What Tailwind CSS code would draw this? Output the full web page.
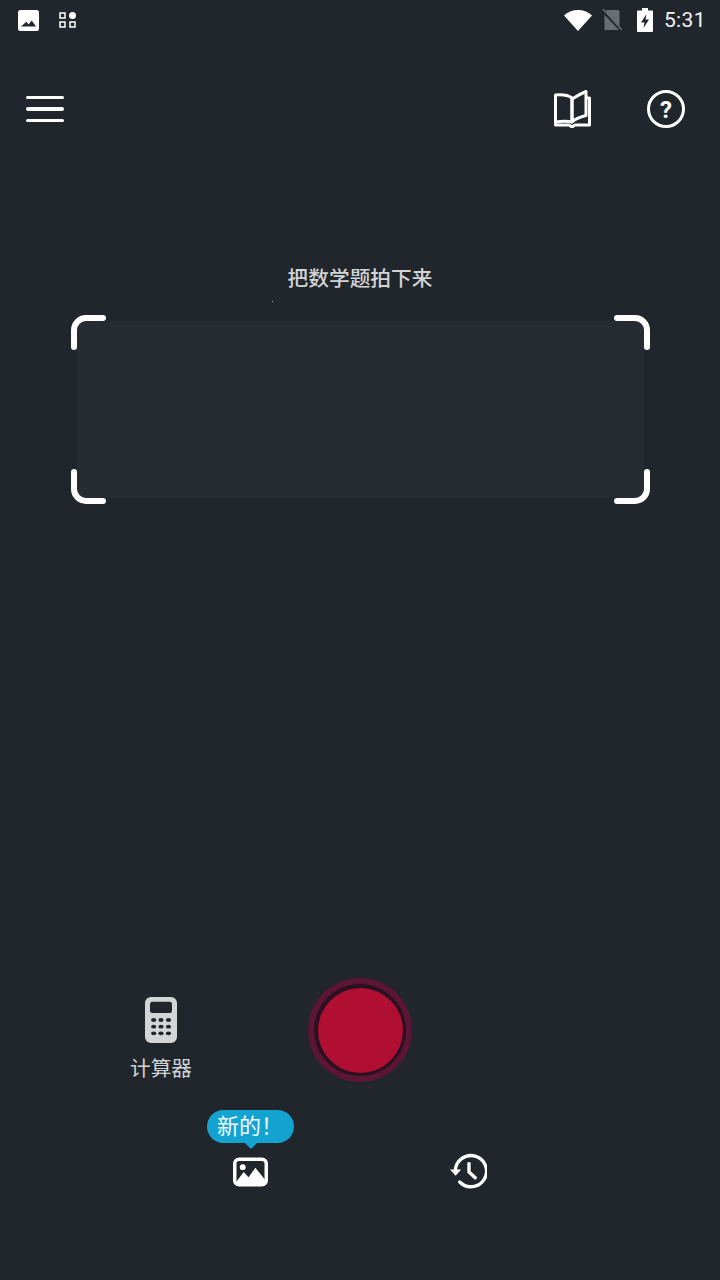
<!DOCTYPE html>
<html lang="zh-CN">
<head>
<meta charset="UTF-8">
<meta name="viewport" content="width=device-width, initial-scale=1.0">
<title>拍照</title>
<script src="https://cdn.jsdelivr.net/npm/@tailwindcss/browser@4"></script>
</head>
<body class="bg-[#20262c]">
<div class="relative flex flex-col w-[720px] h-[1280px] overflow-hidden bg-[#20262c] text-white font-['Roboto','Noto_Sans_CJK_SC',sans-serif]">

    <!-- Status bar -->
    <div class="flex items-center h-[40px] pl-[18px] pr-[14px]">
        <svg class="w-[21px] h-[21px]" viewBox="0 0 21 21"><path fill="#fff" fill-rule="evenodd" d="M2.5 0h16A2.5 2.5 0 0 1 21 2.5v16a2.5 2.5 0 0 1-2.500 2.500h-16A2.500 2.500 0 0 1 0 18.500v-16A2.500 2.500 0 0 1 2.500 0zM3 16.500h15l-4.300-6-3.100 4-2.200-2.700z"/></svg>
        <svg class="ml-[20px] w-[17px] h-[16px]" viewBox="0 0 17 16"><g fill="none" stroke="#fff" stroke-width="1.500"><rect x="1" y="1" width="5" height="5"/><rect x="1" y="10" width="5" height="5"/><rect x="11" y="10" width="5" height="5"/></g><circle cx="13.500" cy="3.500" r="3.500" fill="#fff"/></svg>
        <svg class="ml-auto w-[28px] h-[21px]" viewBox="0 0 28 21"><path fill="#fff" d="M14 21 0 5.500C3.500 2 8.500 0 14 0s10.500 2 14 5.500z"/></svg>
        <svg class="ml-[10px] w-[20px] h-[22px]" viewBox="0 0 20 22"><path fill="#6b6e72" d="M5 1h10.500A2 2 0 0 1 17.500 3v18h-15V4z"/><path stroke="#20262c" stroke-width="3" d="M0 1 19 21"/><path stroke="#6b6e72" stroke-width="1.500" d="M1 0 20 21"/></svg>
        <svg class="ml-[15px] w-[16px] h-[24px]" viewBox="0 0 16 24"><path fill="#fff" fill-rule="evenodd" d="M5 0h6v2.500h4a1 1 0 0 1 1 1V23a1 1 0 0 1-1 1H1a1 1 0 0 1-1-1V3.500a1 1 0 0 1 1-1h4zM9.500 6 4 14.500h3.500L6.500 20 12 11.500H8.500z"/></svg>
        <span class="ml-[11px] text-[21px] leading-none text-[#f2f2f2] tracking-[0.4px]">5:31</span>
    </div>

    <!-- Toolbar -->
    <div class="flex items-center h-[38px] mt-[50px] pl-[26px] pr-[35px]">
        <div class="flex flex-col gap-[8px] w-[38px]">
            <div class="h-[3.500px] rounded-full bg-white"></div>
            <div class="h-[3.500px] rounded-full bg-white"></div>
            <div class="h-[3.500px] rounded-full bg-white"></div>
        </div>
        <svg class="ml-auto w-[37px] h-[38px]" viewBox="0 0 37 38"><g fill="none" stroke="#fff" stroke-width="3" stroke-linejoin="round"><path d="M18 32V8C14 5 8 4.500 1.500 5v27C8 31 14 31 18 32z"/><path d="M18 32V9c4-2.500 8-5 14-7.500v24C26 27 21 29 18 32z"/><path d="M32 8h3.500v27H21l-3 2-3-2H1.500v-3"/></g></svg>
        <svg class="ml-[56px] w-[38px] h-[38px]" viewBox="0 0 38 38"><circle cx="19" cy="19" r="17.500" fill="none" stroke="#fff" stroke-width="3"/><text x="19" y="27.500" text-anchor="middle" fill="#fff" font-family="Roboto" font-weight="700" font-size="24">?</text></svg>
    </div>

    <!-- Title -->
    <div class="mt-[137px] text-center text-[20.700px] leading-[28px] font-medium text-[#d2d4d6]">把数学题拍下来</div>
    <div class="absolute left-[272px] top-[301px] w-[1px] h-[1px] bg-white/70"></div>

    <!-- Scan frame -->
    <div class="relative mt-[22px] ml-[71px] w-[579px] h-[189px] p-[6px]">
        <div class="w-full h-full bg-[#262c31]"></div>
        <svg class="absolute inset-0 w-full h-full" viewBox="0 0 579 189" fill="none" stroke="#fff" stroke-width="6" stroke-linecap="round">
            <path d="M3 32V15A12 12 0 0 1 15 3H32"/>
            <path d="M546 3H564A12 12 0 0 1 576 15V32"/>
            <path d="M3 157V174A12 12 0 0 0 15 186H32"/>
            <path d="M546 186H564A12 12 0 0 0 576 174V157"/>
        </svg>
    </div>

    <!-- Shutter row -->
    <div class="flex items-start mt-[474px] pl-[130px]">
        <div class="flex flex-col items-center w-[62px] mt-[19px]">
            <svg class="w-[32px] h-[46px]" viewBox="0 0 32 46">
                <path fill="#d4d5d7" fill-rule="evenodd" d="M6 0h20a6 6 0 0 1 6 6v34a6 6 0 0 1-6 6H6a6 6 0 0 1-6-6V6a6 6 0 0 1 6-6zm1.500 4.700A2.500 2.500 0 0 0 5 7.200v6.300A2.500 2.500 0 0 0 7.500 16h17a2.500 2.500 0 0 0 2.500-2.500V7.200a2.500 2.500 0 0 0-2.500-2.500z"/>
                <g fill="#20262c"><ellipse cx="8.700" cy="23" rx="2.600" ry="1.900"/><ellipse cx="16" cy="23" rx="2.600" ry="1.900"/><ellipse cx="23.500" cy="23" rx="2.600" ry="1.900"/><ellipse cx="8.700" cy="29.700" rx="2.600" ry="1.900"/><ellipse cx="16" cy="29.700" rx="2.600" ry="1.900"/><ellipse cx="23.500" cy="29.700" rx="2.600" ry="1.900"/><ellipse cx="8.700" cy="36.300" rx="2.600" ry="1.900"/><ellipse cx="16" cy="36.300" rx="2.600" ry="1.900"/><ellipse cx="23.500" cy="36.300" rx="2.600" ry="1.900"/></g>
            </svg>
            <span class="mt-[12px] text-[20.700px] leading-[28px] whitespace-nowrap text-[#d2d4d6]">计算器</span>
        </div>
        <div class="ml-[116px] flex items-center justify-center w-[104px] h-[104px] rounded-full bg-[#5c1532]">
            <div class="flex items-center justify-center w-[92px] h-[92px] rounded-full bg-[#2a1122]">
                <div class="w-[85px] h-[85px] rounded-full bg-[#b00f32]"></div>
            </div>
        </div>
    </div>

    <!-- Bottom icons -->
    <div class="flex items-start mt-[27px] pl-[207px]">
        <div class="flex flex-col items-center w-[87px]">
            <div class="relative flex items-center w-[87px] h-[33px] pl-[10px] rounded-full bg-[#14a3d0] text-[22px] leading-none whitespace-nowrap text-[#eef8fc]">
                新的！
                <div class="absolute left-[37px] bottom-[-6px] w-0 h-0 border-x-[7px] border-x-transparent border-t-[7px] border-t-[#14a3d0]"></div>
            </div>
            <svg class="mt-[14px] w-[35px] h-[30px]" viewBox="0 0 36 30">
                <rect x="1.800" y="1.800" width="32.400" height="26.400" rx="4.500" fill="none" stroke="#fff" stroke-width="3.600"/>
                <circle cx="10" cy="10" r="3" fill="#fff"/>
                <path fill="#fff" d="M3 25.500 11 15l5 5.500 7-10 10 12.500v3a2 2 0 0 1-2 2H5a2 2 0 0 1-2-2z"/>
            </svg>
        </div>
        <svg class="ml-[156px] mt-[42px] w-[37px] h-[38px]" viewBox="0 0 38 38" fill="none" stroke="#fff" stroke-width="3.400">
            <path d="M5.500 19A16 16 0 1 1 10 30.300" stroke-linecap="round"/>
            <path d="M19.500 10v10l7.500 7" />
            <path fill="#fff" stroke="none" d="M0 17.500h11.500L5.800 24z"/>
        </svg>
    </div>
</div>
</body>
</html>
